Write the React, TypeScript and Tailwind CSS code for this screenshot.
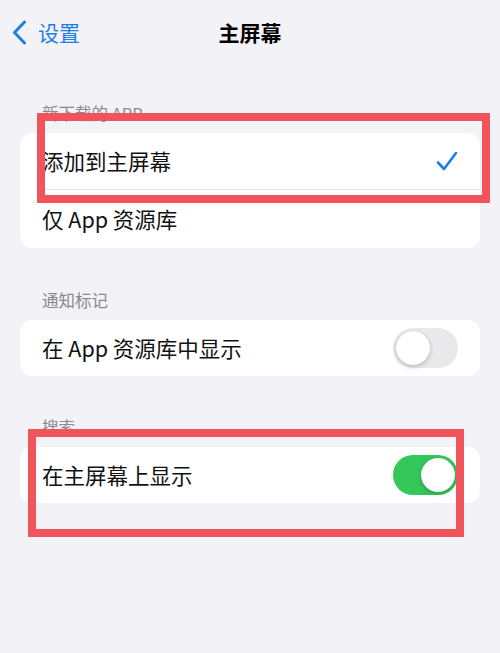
import React from "react"

const font = { fontFamily: '"Noto Sans CJK SC", "Noto Sans", sans-serif' }

/* ---------- Bits ---------- */
function Toggle({ on }: { on: boolean }) {
  return (
    <div
      className={`flex h-[40px] w-[65px] items-center rounded-full px-[3px] ${
        on ? "justify-end bg-[#34c759]" : "justify-start bg-[#e9e9eb]"
      }`}
    >
      <div className="size-[34px] rounded-full bg-white shadow-[0_2px_5px_rgba(0,0,0,0.18),0_0_1px_rgba(0,0,0,0.2)]" />
    </div>
  )
}

function Check() {
  return (
    <svg width="22" height="20" viewBox="0 0 22 20" fill="none">
      <path d="M2 11.5 L8 18 L20 2" stroke="#1d7ee3" strokeWidth="2.6" strokeLinecap="round" strokeLinejoin="round" />
    </svg>
  )
}

function SectionLabel({ children }: { children: React.ReactNode }) {
  return <div className="mb-[9px] pl-[22px] text-[16.5px] leading-[22px] text-[#8a8a8e]">{children}</div>
}

function Row({ label, right, divider }: { label: string; right?: React.ReactNode; divider?: boolean }) {
  return (
    <div className="flex h-[57px] items-center pl-[22px]">
      <div className={`flex h-full flex-1 items-center pr-[22px] ${divider ? "border-b border-[#e3e3e6]" : ""}`}>
        <span className="flex-1 text-[21.5px] text-[#111]">{label}</span>
        {right}
      </div>
    </div>
  )
}

/* ---------- Page ---------- */
export default function App() {
  return (
    <div className="relative h-[653px] w-[500px] overflow-hidden bg-[#f2f2f7]" style={font}>
      {/* Nav bar */}
      <div className="relative flex h-[68px] items-center px-[12px]">
        <div className="-mt-[4px] flex items-center gap-[11px] text-[#1d7ee3]">
          <svg width="15" height="25" viewBox="0 0 15 25" fill="none">
            <path d="M12.5 2 L2.5 12.5 L12.5 23" stroke="#1d7ee3" strokeWidth="3" strokeLinecap="round" strokeLinejoin="round" />
          </svg>
          <span className="text-[21px] leading-none">设置</span>
        </div>
        <div className="absolute left-1/2 top-[32px] -translate-x-1/2 -translate-y-1/2 text-[21px] font-bold leading-none text-black">
          主屏幕
        </div>
      </div>

      <div className="px-[20px] pt-[34px]">
        <SectionLabel>新下载的 APP</SectionLabel>
        <div className="overflow-hidden rounded-[12px] bg-white">
          <Row label="添加到主屏幕" right={<Check />} divider />
          <div className="h-[1px]" />
          <Row label="仅 App 资源库" />
        </div>

        <div className="mt-[41px]">
          <SectionLabel>通知标记</SectionLabel>
          <div className="rounded-[12px] bg-white">
            <div className="flex h-[56px] items-center pl-[22px] pr-[22px]">
              <span className="flex-1 text-[21.5px] text-[#111]">在 App 资源库中显示</span>
              <Toggle on={false} />
            </div>
          </div>
        </div>

        <div className="mt-[40px]">
          <SectionLabel>搜索</SectionLabel>
          <div className="rounded-[12px] bg-white">
            <div className="flex h-[56px] items-center pl-[22px] pr-[22px]">
              <span className="flex-1 text-[21.5px] text-[#111]">在主屏幕上显示</span>
              <Toggle on />
            </div>
          </div>
        </div>
      </div>

      {/* Red annotation boxes */}
      <div className="pointer-events-none absolute left-[37px] top-[113px] h-[90px] w-[453px] border-[8px] border-[#f2545b]" />
      <div className="pointer-events-none absolute left-[28px] top-[429px] h-[108px] w-[436px] border-[8px] border-[#f2545b]" />
    </div>
  )
}
